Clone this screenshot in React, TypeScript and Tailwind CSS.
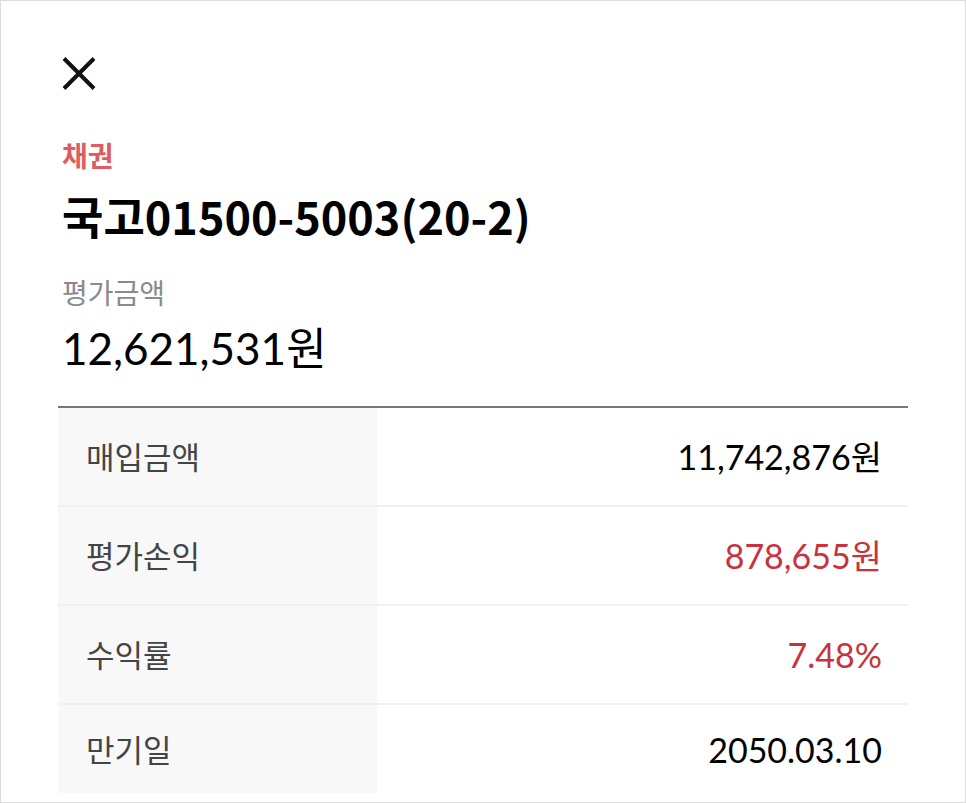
import React, { FC } from "react";

const rows = [
  { label: "매입금액", value: "11,742,876원", red: false },
  { label: "평가손익", value: "878,655원", red: true },
  { label: "수익률", value: "7.48%", red: true },
  { label: "만기일", value: "2050.03.10", red: false },
];

const kr = "font-['Noto_Sans_CJK_KR',sans-serif]";
const num = "font-['Lato','Noto_Sans_CJK_KR',sans-serif]";

const App: FC = () => {
  return (
    <div className="w-[966px] h-[803px] bg-white border border-[#dcdcdc] overflow-hidden">
      <div className="px-[57px]">
        <div className="pl-[4px] pt-[56px]">
          <svg width="34" height="33" viewBox="0 0 34 33" fill="none">
            <path d="M2 1.5L32 31.5M32 1.5L2 31.5" stroke="#111" strokeWidth="4" />
          </svg>

          <div className={`${kr} mt-[51px] text-[28px] leading-[28px] font-bold text-[#df5c60]`}>채권</div>
          <div className={`${kr} mt-[24px] text-[45px] leading-[45px] font-bold text-black`}>
            국고01500-5003(20-2)
          </div>
          <div className={`${kr} mt-[40px] text-[28px] leading-[28px] text-[#8a8a8a]`}>평가금액</div>
          <div className={`${num} mt-[20px] text-[44px] leading-[44px] text-black`}>12,621,531원</div>
        </div>

        <div className="mt-[36px] border-t-2 border-[#777]">
          {rows.map(({ label, value, red }, i) => (
            <div
              key={label}
              className={`flex ${i < rows.length - 1 ? "h-[99px] border-b-2 border-[#f0f0f0]" : "h-[88px]"}`}
            >
              <div className={`${kr} w-[319px] bg-[#f8f8f8] flex items-center pl-[28px] text-[31px] text-[#444]`}>
                {label}
              </div>
              <div
                className={`${num} flex-1 flex items-center justify-end pr-[26px] text-[34px] ${
                  red ? "text-[#c9323d]" : "text-black"
                }`}
              >
                {value}
              </div>
            </div>
          ))}
        </div>
      </div>
    </div>
  );
};

export default App;
